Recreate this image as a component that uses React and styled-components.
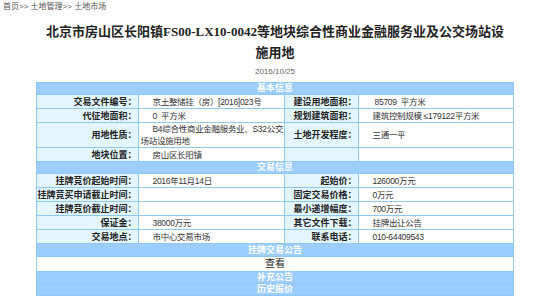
import React from 'react'
import styled, { createGlobalStyle } from 'styled-components'

const GlobalStyle = createGlobalStyle`
  body {
    margin: 0;
    background: #fff;
    font-family: "Liberation Sans", "Noto Sans CJK SC", sans-serif;
  }
`

const basicRows = [
    ['交易文件编号：', '京土整储挂（房）[2016]023号', '建设用地面积：', '\u00a085709\u00a0\u00a0平方米'],
    ['代征地面积：', '0\u00a0\u00a0平方米', '规划建筑面积：', '建筑控制规模 ≤179122平方米'],
    ['用地性质：', 'B4综合性商业金融服务业、S32公交场站设施用地', '土地开发程度：', '三通一平'],
    ['地块位置：', '房山区长阳镇', '', ''],
]

const tradeRows = [
    ['挂牌竞价起始时间：', '2016年11月14日', '起始价：', '126000万元'],
    ['挂牌竞买申请截止时间：', '', '固定交易价格：', '0万元'],
    ['挂牌竞价截止时间：', '', '最小递增幅度：', '700万元'],
    ['保证金：', '38000万元', '其它文件下载：', '挂牌出让公告'],
    ['交易地点：', '市中心交易市场', '联系电话：', '010-64409543'],
]

const Crumbs = styled.div`
    padding: 2px 0 0 3px;
    font-size: 8px;
    line-height: 10px;
    color: #555;
`

const Title = styled.h1`
    width: 466px;
    margin: 9px auto 0;
    font-family: "Liberation Serif", "Noto Sans CJK SC", serif;
    font-size: 13px;
    line-height: 21px;
    font-weight: bold;
    text-align: center;
    color: #222;
`

const DateLine = styled.div`
    margin-top: 3px;
    text-align: center;
    font-size: 8px;
    line-height: 12px;
    color: #666;
`

const Table = styled.table`
    width: 476px;
    margin: 4px auto 0;
    border-collapse: collapse;
    table-layout: fixed;
    font-size: 9px;
`

const Cell = styled.td`
    border: 1px solid #8ec8f6;
    padding: 0;
    height: ${p => p.$h || 13}px;
    line-height: 12px;
`

const Bar = styled(Cell)`
    background: #9bcdfe;
    color: #fff;
    font-weight: bold;
    text-align: center;
    line-height: 11px;
`

const Label = styled(Cell)`
    background: #e3f6fd;
    color: #222;
    font-weight: bold;
    text-align: right;
    white-space: nowrap;
    padding-right: 2px;
`

const Value = styled(Cell)`
    background: #fff;
    color: #333;
    font-size: 8.5px;
    letter-spacing: -0.3px;
    text-indent: 12px;
    padding-left: 1px;
`

const Center = styled(Cell)`
    background: #fff;
    color: #222;
    text-align: center;
    font-size: 10px;
`

const DataRow = ({ row, tall }) => (
    <tr>
        <Label $h={tall ? 23 : 13}>{row[0]}</Label>
        <Value $h={tall ? 23 : 13}>{row[1]}</Value>
        <Label $h={tall ? 23 : 13}>{row[2]}</Label>
        <Value $h={tall ? 23 : 13}>{row[3]}</Value>
    </tr>
)

const SectionBar = ({ children, h }) => (
    <tr>
        <Bar colSpan={4} $h={h || 11}>{children}</Bar>
    </tr>
)

export default function App() {
    return (
        <>
            <GlobalStyle />
            <Crumbs>首页&gt;&gt; 土地管理&gt;&gt; 土地市场</Crumbs>
            <Title>北京市房山区长阳镇FS00-LX10-0042等地块综合性商业金融服务业及公交场站设施用地</Title>
            <DateLine>2016/10/25</DateLine>
            <Table>
                <colgroup>
                    <col style={{ width: 102 }} />
                    <col style={{ width: 146 }} />
                    <col style={{ width: 74 }} />
                    <col style={{ width: 154 }} />
                </colgroup>
                <tbody>
                    <SectionBar>基本信息</SectionBar>
                    {basicRows.map((r, i) => <DataRow key={i} row={r} tall={i === 2} />)}
                    <SectionBar>交易信息</SectionBar>
                    {tradeRows.map((r, i) => <DataRow key={i} row={r} />)}
                    <SectionBar h={12}>挂牌交易公告</SectionBar>
                    <tr>
                        <Center colSpan={4} $h={14}>查看</Center>
                    </tr>
                    <SectionBar>补充公告</SectionBar>
                    <SectionBar>历史报价</SectionBar>
                </tbody>
            </Table>
        </>
    )
}
